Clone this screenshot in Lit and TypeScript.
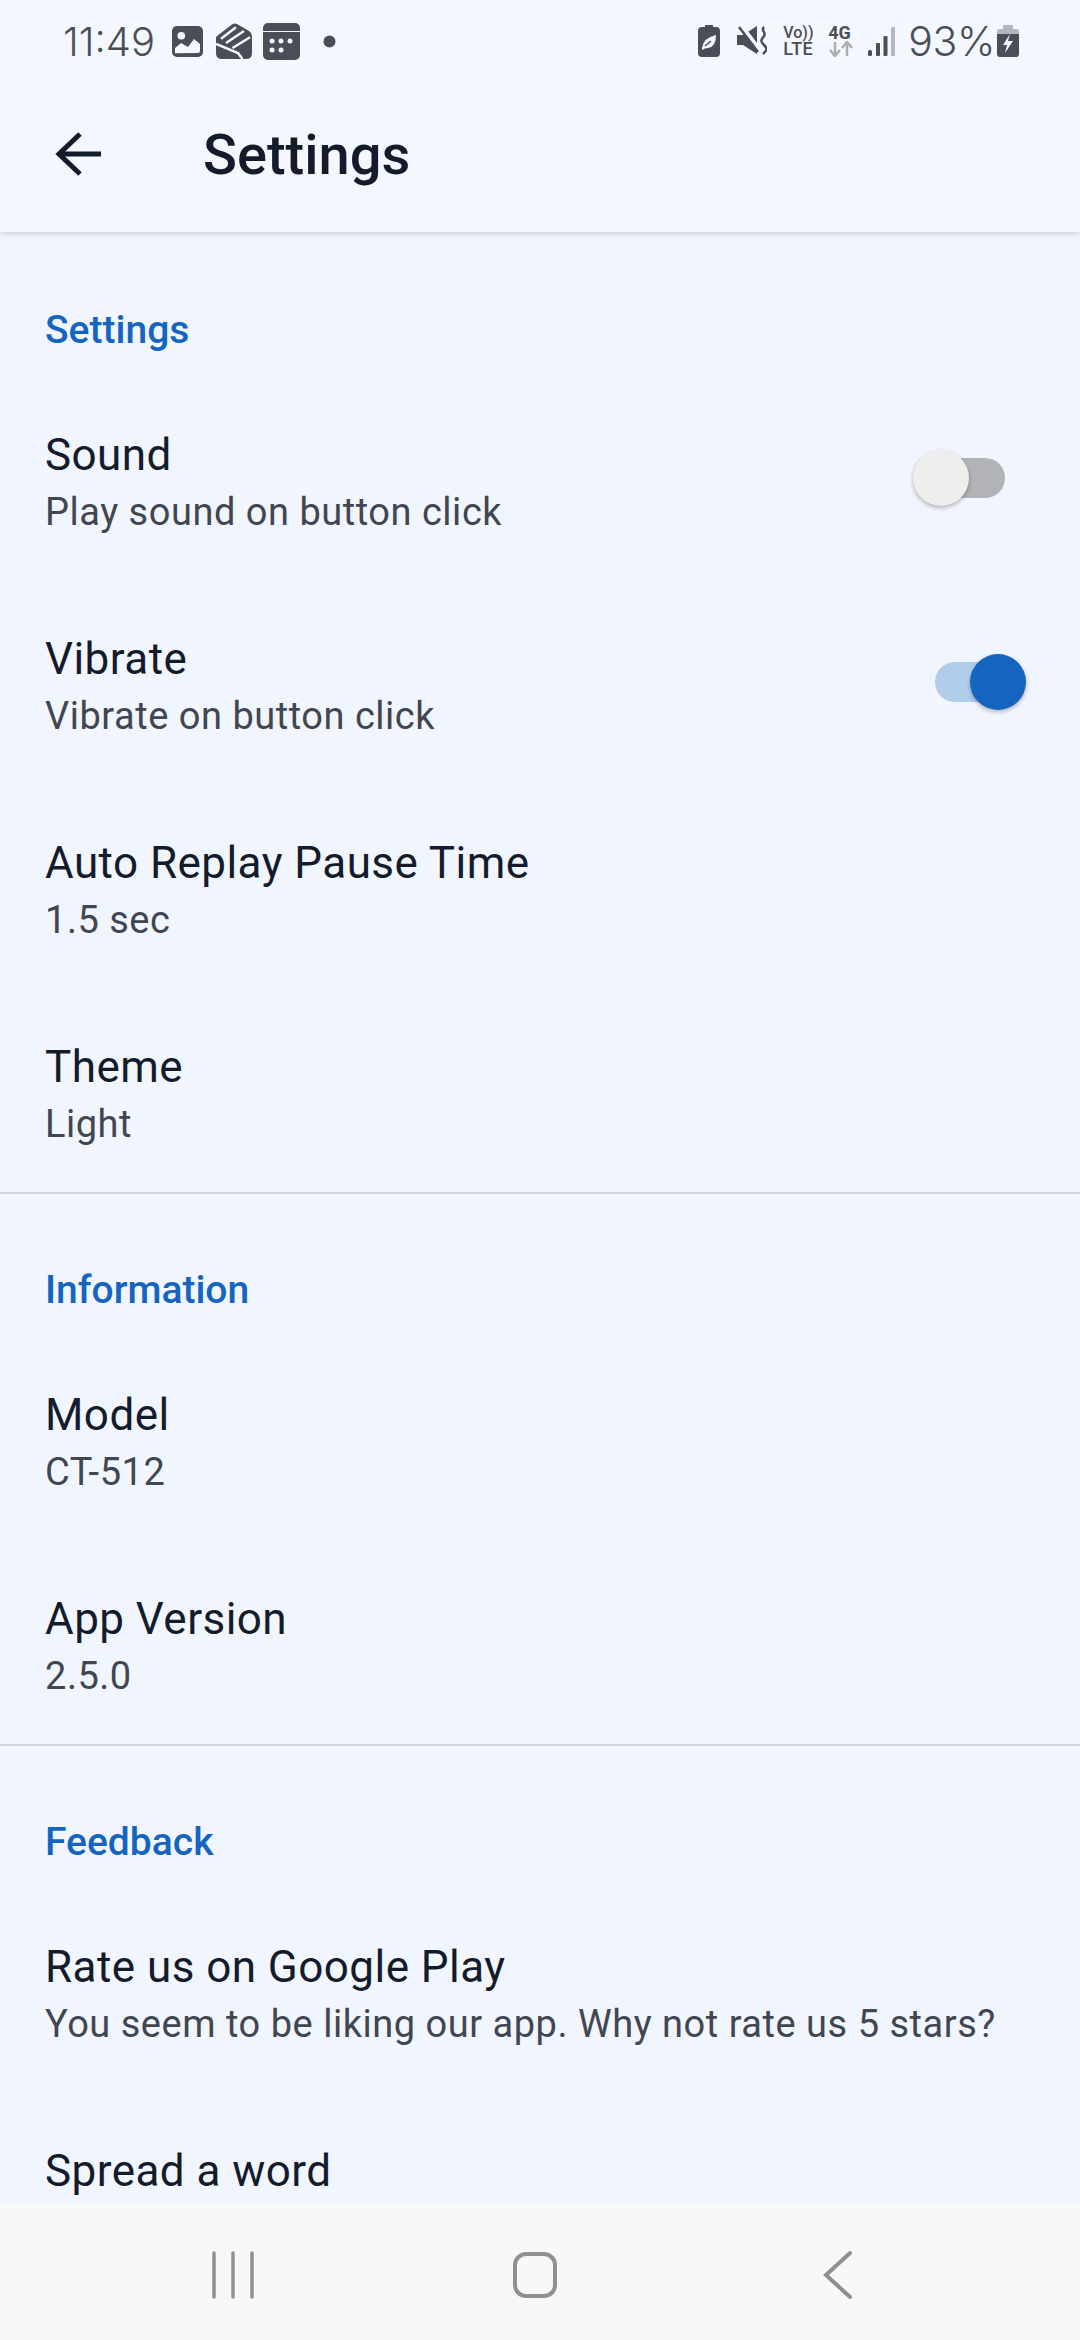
import { LitElement, html, css } from "lit";
import { customElement, property } from "lit/decorators.js";

@customElement("app-switch")
class AppSwitch extends LitElement {
  @property({ type: Boolean, reflect: true }) on = false;
  static styles = css`
    :host { display: block; position: relative; flex: none; width: 70px; height: 40px; border-radius: 20px; background: #b1b3b6; }
    .thumb { position: absolute; top: -8px; left: -22px; width: 56px; height: 56px; border-radius: 50%; background: #eeeeec; box-shadow: 0 2px 4px rgba(0,0,0,.28); }
    :host([on]) { background: #b1cdec; }
    :host([on]) .thumb { left: 35px; background: #1565c0; }
  `;
  render() { return html`<div class="thumb"></div>`; }
}

@customElement("app-root")
class AppRoot extends LitElement {
  static styles = css`
    :host { display: flex; flex-direction: column; width: 1080px; height: 2340px; overflow: hidden; background: #f1f5fe; font-family: Roboto, sans-serif; color: #141b2b; }
    .status { height: 82px; flex: none; display: flex; align-items: center; padding-left: 63px; padding-right: 61px; box-sizing: border-box; background: #f4f7fd; color: #4b4e54; }
    .time { font-size: 40px; width: 109px; flex: none; font-family: Inter, Roboto, sans-serif; font-weight: 300; }
    .status svg { display: block; flex: none; }
    .spacer { flex: 1; }
    .pct { font-size: 41px; font-family: Inter, Roboto, sans-serif; font-weight: 300; margin-left: 13px; margin-right: 2px; letter-spacing: -0.4px; }
    .ml13 { margin-left: 13px; } .ml10 { margin-left: 10px; } .ml23 { margin-left: 23px; } .ml17 { margin-left: 17px; } .ml14 { margin-left: 14px; }
    .volte { margin-left: 16px; width: 32px; display: flex; flex-direction: column; font-weight: 500; }
    .volte .a { font-size: 16px; line-height: 15px; }
    .volte .b { font-size: 18px; line-height: 18px; letter-spacing: .4px; }
    .net { margin-left: 13px; width: 26px; display: flex; flex-direction: column; }
    .net .a { font-size: 18px; line-height: 16px; font-weight: 700; }
    .bar { flex: none; height: 150px; display: flex; align-items: center; background: #f4f7fd; box-shadow: 0 2px 6px rgba(0,0,0,.16); position: relative; z-index: 1; box-sizing: border-box; padding-bottom: 4px; clip-path: inset(0 0 -20px 0); }
    .back { width: 203px; padding-left: 55px; box-sizing: border-box; flex: none; }
    .back svg { display: block; }
    .title { font-size: 56px; font-weight: 500; color: #141b2b; }
    .list { flex: 1; min-height: 0; overflow: hidden; }
    .section { border-bottom: 2px solid #d3d7dc; }
    .section:last-child { border: 0; }
    .head { font-size: 39px; font-weight: 500; color: #1565c0; padding: 0 45px; line-height: 44px; margin-top: 76px; margin-bottom: 28px; }
    .section + .section .head { margin-top: 74px; }
    .item { display: flex; align-items: center; height: 204px; padding: 46px 75px 46px 45px; box-sizing: border-box; }
    .item:last-child { height: 200px; padding-bottom: 42px; }
    .text { flex: 1; min-width: 0; align-self: flex-start; padding-top: 1px; }
    .t { font-size: 44px; line-height: 56px; letter-spacing: .45px; white-space: nowrap; }
    .s { font-size: 38px; line-height: 56px; margin-top: 1px; color: #414651; letter-spacing: .52px; white-space: nowrap; }
    app-switch { margin-bottom: 8px; }
    .nav { flex: none; height: 135px; background: #f7f8fa; }
    .nav svg { display: block; }
  `;

  item(t: string, s: string, sw?: unknown) {
    return html`<div class="item"><div class="text"><div class="t">${t}</div>${s ? html`<div class="s">${s}</div>` : ""}</div>${sw ?? ""}</div>`;
  }

  render() {
    return html`
      <div class="status">
        <div class="time">11:49</div>
        <svg width="31" height="31" viewBox="0 0 31 31"><rect width="31" height="31" rx="5" fill="#4b4e54"/><circle cx="9.300" cy="9.700" r="3.800" fill="#f4f7fd"/><path d="M3 27.300V22l6-5 7 4 6-8 6 5v7q0 2-2 2z" fill="#f4f7fd"/></svg>
        <svg class="ml13" width="37" height="37" viewBox="0 0 37 37"><path d="M1 13 16 1.500Q18 0 21 1L33 8Q36 10 36 13V30Q36 36 30 36H6Q0 36 0 30V15Q0 14 1 13z" fill="#4b4e54"/><path d="M5 15.700 20 4.300M10 20 28 8M16.500 25 34 14.300M0 21 22 30l4.500 6" stroke="#f4f7fd" stroke-width="2.500" fill="none"/></svg>
        <svg class="ml10" width="37" height="37" viewBox="0 0 37 37"><path d="M5 0h27a5 5 0 0 1 5 5v3H0V5a5 5 0 0 1 5-5zM0 9h37v23a5 5 0 0 1-5 5H5a5 5 0 0 1-5-5z" fill="#4b4e54"/><g fill="#f4f7fd"><circle cx="9" cy="18" r="2.500"/><circle cx="18" cy="18" r="2.500"/><circle cx="27" cy="18" r="2.500"/><circle cx="9" cy="27" r="2.500"/><circle cx="18" cy="27" r="2.500"/></g></svg>
        <svg class="ml23" width="13" height="13" viewBox="0 0 13 13"><circle cx="6.500" cy="6.500" r="6" fill="#4b4e54"/></svg>
        <div class="spacer"></div>
        <svg width="22" height="32" viewBox="0 0 22 32"><path d="M7 0h8v2h3a4 4 0 0 1 4 4v22a4 4 0 0 1-4 4H4a4 4 0 0 1-4-4V6a4 4 0 0 1 4-4h3z" fill="#4b4e54"/><path d="M4 23q1-10 14-13 0 12-8 13-3 0-6 2" fill="#f4f7fd"/><path d="M7 21l6-5" stroke="#4b4e54" stroke-width="1.500"/></svg>
        <svg class="ml17" width="30" height="30" viewBox="0 0 30 30"><path d="M0 9h6L20 0v28L6 19H0z" fill="#4b4e54"/><path d="M4 0l19 25" stroke="#f4f7fd" stroke-width="5"/><path d="M2 1l19 25" stroke="#4b4e54" stroke-width="2.500"/><path d="M27 1c-4 4 3 5 0 9s-4 5 0 9 3 5-1 9" stroke="#4b4e54" stroke-width="2.500" fill="none"/></svg>
        <div class="volte"><div class="a">Vo))</div><div class="b">LTE</div></div>
        <div class="net"><div class="a">4G</div><svg width="26" height="16" viewBox="0 0 26 16"><path d="M7 1v14M2 9l5 6 5-6" stroke="#a9acb1" stroke-width="2.500" fill="none"/><path d="M19 15V1M14 7l5-6 5 6" stroke="#a9acb1" stroke-width="2.500" fill="none"/></svg></div>
        <svg class="ml14" width="27" height="29" viewBox="0 0 27 29"><rect x="0" y="23" width="4" height="6" rx="1.500" fill="#4b4e54"/><rect x="8" y="16" width="4" height="13" rx="1" fill="#4b4e54"/><rect x="15.500" y="9" width="4" height="20" rx="1" fill="#4b4e54"/><rect x="23" y="0" width="4" height="29" rx="1" fill="#b4b7bb"/></svg>
        <div class="pct">93%</div>
        <svg width="22" height="32" viewBox="0 0 22 32"><path d="M6 0h10v4H6z" fill="#b4b7bb"/><path d="M3 4h16a3 3 0 0 1 3 3v2H0V7a3 3 0 0 1 3-3z" fill="#b4b7bb"/><path d="M0 9h22v20a3 3 0 0 1-3 3H3a3 3 0 0 1-3-3z" fill="#4b4e54"/><path d="M13 9 6 20h4l-2 8 8-12h-5z" fill="#f4f7fd"/></svg>
      </div>
      <div class="bar">
        <div class="back"><svg width="46" height="46" viewBox="0 0 46 46"><path d="M46 22H5M25 2 4 22l21 20" fill="none" stroke="#141b2b" stroke-width="5"/></svg></div>
        <div class="title">Settings</div>
      </div>
      <div class="list">
        <div class="section">
          <div class="head">Settings</div>
          ${this.item("Sound", "Play sound on button click", html`<app-switch></app-switch>`)}
          ${this.item("Vibrate", "Vibrate on button click", html`<app-switch on></app-switch>`)}
          ${this.item("Auto Replay Pause Time", "1.5 sec")}
          ${this.item("Theme", "Light")}
        </div>
        <div class="section">
          <div class="head">Information</div>
          ${this.item("Model", "CT-512")}
          ${this.item("App Version", "2.5.0")}
        </div>
        <div class="section">
          <div class="head">Feedback</div>
          ${this.item("Rate us on Google Play", "You seem to be liking our app. Why not rate us 5 stars?")}
          ${this.item("Spread a word", "")}
        </div>
      </div>
      <div class="nav">
        <svg width="1080" height="135" viewBox="0 0 1080 135">
          <g stroke="#8f9092" stroke-width="3.500" fill="none" stroke-linecap="round">
            <path d="M214 48v44M233 48v44M252 48v44"/>
            <rect x="515" y="49" width="40" height="42" rx="11" stroke-width="4"/>
            <path d="M850 48 826 70l24 22" stroke-width="4"/>
          </g>
        </svg>
      </div>
    `;
  }
}
